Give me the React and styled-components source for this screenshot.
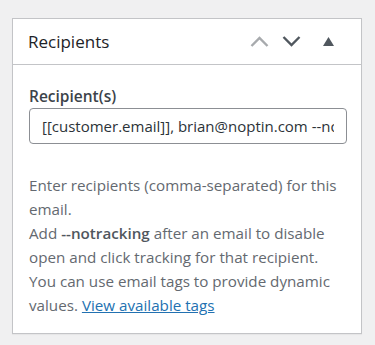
import styled, { createGlobalStyle } from "styled-components";

const GlobalStyle = createGlobalStyle`
  html, body {
    margin: 0;
    padding: 0;
    background: #f0f0f1;
    font-family: "Segoe UI", "Open Sans", "Noto Sans", sans-serif;
  }
`;

const Page = styled.div`
  padding: 18px 13px 12px 12px;
`;

const Postbox = styled.section`
  width: 350px;
  box-sizing: border-box;
  background: #fff;
  border: 1px solid #c3c4c7;
  box-shadow: 0 1px 1px rgba(0, 0, 0, 0.04);
`;

const Header = styled.div`
  display: flex;
  align-items: center;
  height: 45px;
  padding-left: 15px;
  border-bottom: 1px solid #c3c4c7;
`;

const Title = styled.h2`
  flex: 1;
  margin: 0 0 1px;
  font-size: 17px;
  font-weight: 400;
  color: #1d2327;
`;

const Handles = styled.div`
  display: flex;
  align-items: center;
  padding-right: 12px;
`;

const HandleButton = styled.button`
  all: unset;
  display: flex;
  align-items: center;
  justify-content: center;
  width: ${(p) => p.$w}px;
  height: 36px;
  color: ${(p) => p.$color};
  cursor: pointer;
`;

const Inside = styled.div`
  padding: 20px 14px 16px 16px;
`;

const Label = styled.label`
  display: block;
  font-size: 15.5px;
  line-height: 22px;
  font-weight: 600;
  color: #3c434a;
  margin-bottom: 1px;
`;

const Input = styled.input`
  display: block;
  width: 100%;
  box-sizing: border-box;
  height: 36px;
  padding: 0 12px;
  border: 1px solid #8c8f94;
  border-radius: 4px;
  font-family: inherit;
  font-size: 15px;
  color: #2c3338;
  background: #fff;
  outline: none;
`;

const Description = styled.p`
  margin: 29px 0 0;
  font-size: 15.2px;
  line-height: 24px;
  color: #646970;

  strong {
    font-weight: 600;
    color: #50575e;
  }

  a {
    color: #2271b1;
  }
`;

const Chevron = ({ up }) => (
  <svg width="19" height="11" viewBox="0 0 19 11" fill="none">
    <path
      d={up ? "M1.5 10L9.5 2L17.5 10" : "M1.5 1L9.5 9L17.5 1"}
      stroke="currentColor"
      strokeWidth="2.4"
    />
  </svg>
);

const Triangle = () => (
  <svg width="11" height="9" viewBox="0 0 11 9">
    <path d="M5.5 0L11 9H0Z" fill="currentColor" />
  </svg>
);

export default function App() {
  return (
    <Page>
      <GlobalStyle />
      <Postbox>
        <Header>
          <Title>Recipients</Title>
          <Handles>
            <HandleButton $w={32} $color="#a7aaad">
              <Chevron up />
            </HandleButton>
            <HandleButton $w={32} $color="#50575e">
              <Chevron />
            </HandleButton>
            <HandleButton $w={42} $color="#50575e">
              <Triangle />
            </HandleButton>
          </Handles>
        </Header>
        <Inside>
          <Label htmlFor="recipients">Recipient(s)</Label>
          <Input
            id="recipients"
            defaultValue="[[customer.email]], brian@noptin.com --notracking"
          />
          <Description>
            Enter recipients (comma-separated) for this email.
            <br />
            Add <strong>--notracking</strong> after an email to disable open
            and click tracking for that recipient.
            <br />
            You can use email tags to provide dynamic values.{" "}
            <a href="#">View available tags</a>
          </Description>
        </Inside>
      </Postbox>
    </Page>
  );
}
